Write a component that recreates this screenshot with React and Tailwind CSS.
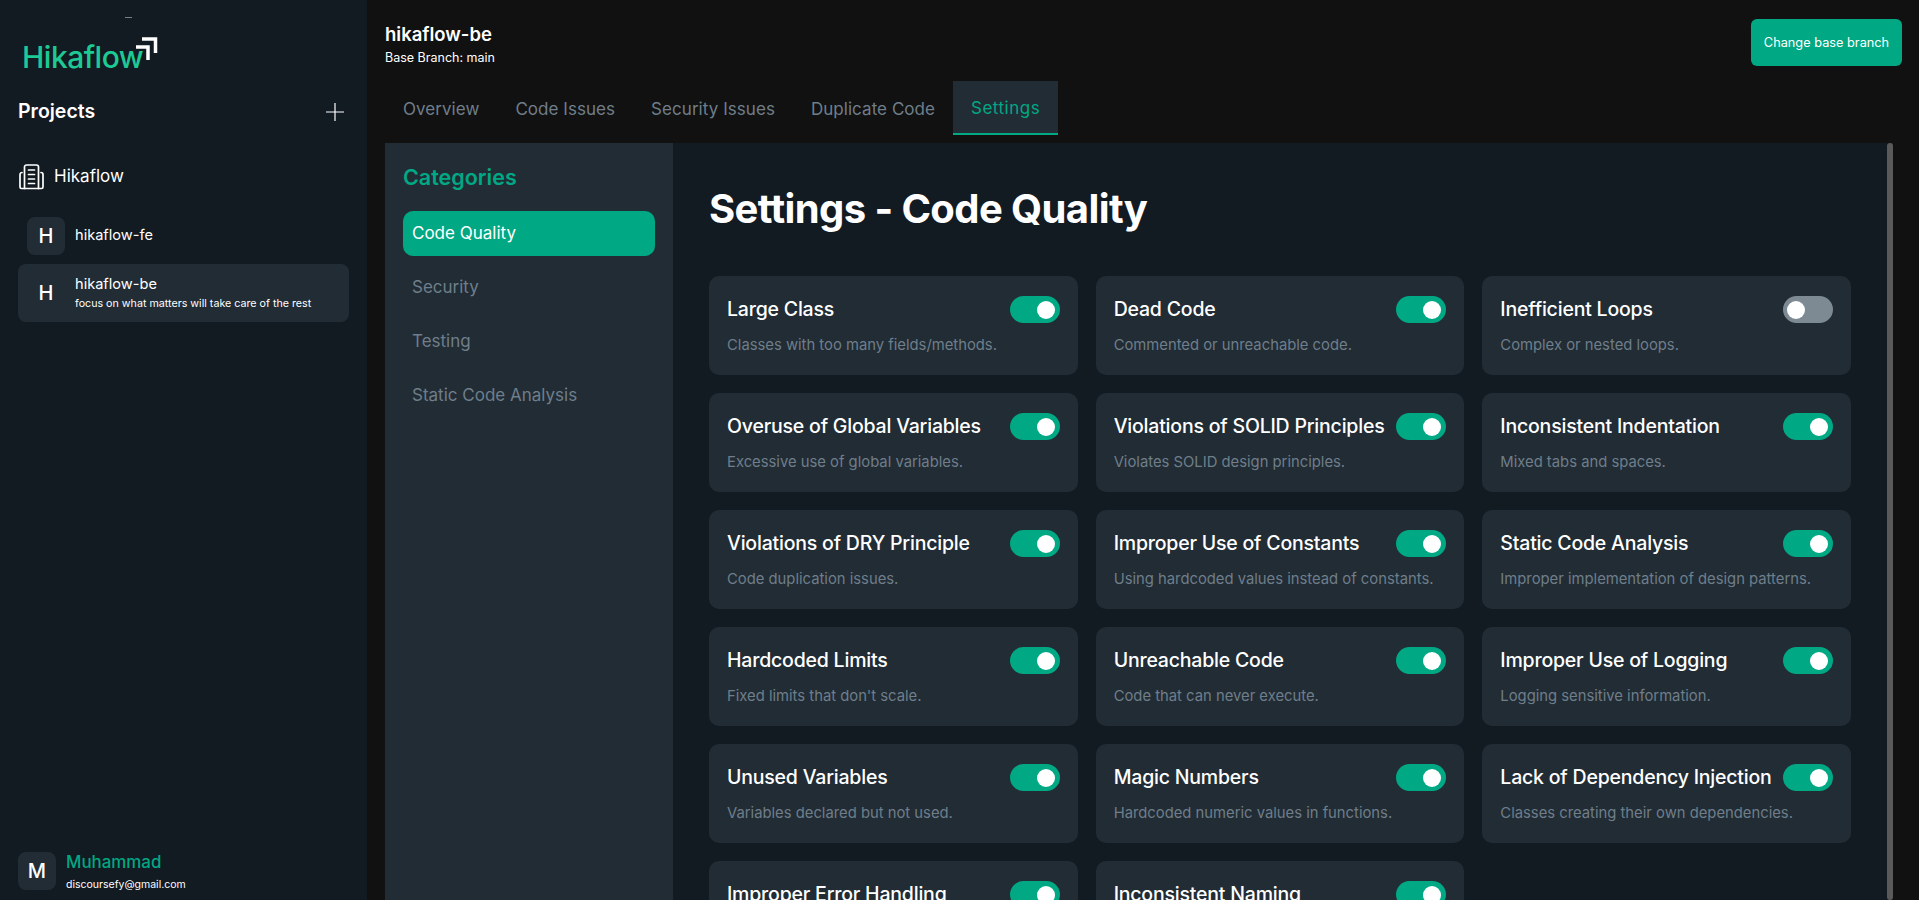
import React from 'react'

const font = "font-['Inter','Noto_Sans',sans-serif]"

const rules = [
  { title: 'Large Class', desc: 'Classes with too many fields/methods.', on: true },
  { title: 'Dead Code', desc: 'Commented or unreachable code.', on: true },
  { title: 'Inefficient Loops', desc: 'Complex or nested loops.', on: false },
  { title: 'Overuse of Global Variables', desc: 'Excessive use of global variables.', on: true },
  { title: 'Violations of SOLID Principles', desc: 'Violates SOLID design principles.', on: true },
  { title: 'Inconsistent Indentation', desc: 'Mixed tabs and spaces.', on: true },
  { title: 'Violations of DRY Principle', desc: 'Code duplication issues.', on: true },
  { title: 'Improper Use of Constants', desc: 'Using hardcoded values instead of constants.', on: true },
  { title: 'Static Code Analysis', desc: 'Improper implementation of design patterns.', on: true },
  { title: 'Hardcoded Limits', desc: "Fixed limits that don't scale.", on: true },
  { title: 'Unreachable Code', desc: 'Code that can never execute.', on: true },
  { title: 'Improper Use of Logging', desc: 'Logging sensitive information.', on: true },
  { title: 'Unused Variables', desc: 'Variables declared but not used.', on: true },
  { title: 'Magic Numbers', desc: 'Hardcoded numeric values in functions.', on: true },
  { title: 'Lack of Dependency Injection', desc: 'Classes creating their own dependencies.', on: true },
  { title: 'Improper Error Handling', desc: 'Missing or generic error handling.', on: true },
  { title: 'Inconsistent Naming', desc: 'Names that do not follow conventions.', on: true },
]

const tabs = ['Overview', 'Code Issues', 'Security Issues', 'Duplicate Code', 'Settings']
const categories = ['Code Quality', 'Security', 'Testing', 'Static Code Analysis']

const Avatar = ({ letter }) => (
  <div className="w-[38px] h-[38px] shrink-0 rounded-lg bg-[#212c35] flex items-center justify-center text-white text-[20px] font-medium">
    {letter}
  </div>
)

const Toggle = ({ on }) => (
  <div className={`w-[50px] h-[27px] shrink-0 rounded-full flex items-center ${on ? 'bg-[#00a884] justify-end pr-[5px]' : 'bg-[#7d8a94] justify-start pl-[4px]'}`}>
    <div className="w-[18px] h-[18px] rounded-full bg-white"></div>
  </div>
)

const RuleCard = ({ title, desc, on }) => (
  <div className="h-[99px] shrink-0 rounded-[10px] bg-[#212c35] px-[18px] pt-[20px]">
    <div className="flex items-center justify-between gap-1 h-[27px]">
      <span className="text-white text-[19.5px] font-medium tracking-[-0.2px] whitespace-nowrap">{title}</span>
      <Toggle on={on} />
    </div>
    <p className="mt-[12px] text-[#6f7e8a] text-[14.8px] leading-[20px] whitespace-nowrap">{desc}</p>
  </div>
)

const Logo = () => (
  <div className="relative h-[90px] shrink-0 pl-[22px] pt-[37px]">
    <span className="block text-[#1dc994] text-[30px] font-medium leading-[40px] tracking-[-0.5px]">Hikaflow</span>
    <svg className="absolute left-[134px] top-[36px]" width="25" height="26" viewBox="0 0 25 26" fill="none" stroke="#fff" strokeWidth="3.5">
      <path d="M8 3h13.500v14" />
      <path d="M2 11h12v13" />
    </svg>
    <div className="absolute left-[125px] top-[17px] w-[7px] h-px bg-[#77808a]"></div>
  </div>
)

const Sidebar = () => (
  <aside className="w-[367px] shrink-0 h-full bg-[#121a22] flex flex-col text-white">
    <Logo />
    <div className="flex items-center justify-between pl-[18px] pr-[23px] mt-[6px] h-[32px]">
      <span className="text-[19.5px] font-semibold">Projects</span>
      <svg width="18" height="18" viewBox="0 0 18 18" stroke="#fff" strokeWidth="1.2">
        <path d="M9 0v18M0 9h18" />
      </svg>
    </div>
    <div className="flex items-center gap-[10px] pl-[19px] mt-[34px] h-[30px]">
      <svg width="25" height="26" viewBox="0 0 25 26" fill="none" stroke="#fff" strokeWidth="1.7" strokeLinejoin="round" strokeLinecap="round">
        <path d="M5.500 24.500V3a2 2 0 0 1 2-2h10a2 2 0 0 1 2 2v21.500" />
        <path d="M3 8.500a2 2 0 0 0-2 2v12.500a1.500 1.500 0 0 0 1.500 1.500h20a1.500 1.500 0 0 0 1.500-1.500V10.500a2 2 0 0 0-2-2" />
        <path d="M9.500 6h6M9.500 10.500h6M9.500 15h6M9.500 19.500h6" />
      </svg>
      <span className="text-[17px]">Hikaflow</span>
    </div>
    <div className="flex items-center gap-[10px] pl-[27px] mt-[25px] h-[38px]">
      <Avatar letter="H" />
      <span className="text-[14.600px]">hikaflow-fe</span>
    </div>
    <div className="mx-[18px] mt-[9px] h-[58px] rounded-lg bg-[#212c35] flex items-center gap-[10px] pl-[9px]">
      <Avatar letter="H" />
      <div className="flex flex-col">
        <span className="text-[14.600px] leading-[20px]">hikaflow-be</span>
        <span className="text-[10.700px] leading-[16px] mt-[2px] whitespace-nowrap">focus on what matters will take care of the rest</span>
      </div>
    </div>
    <div className="mt-auto mb-[10px] ml-[18px] h-[38px] flex items-center gap-[10px]">
      <Avatar letter="M" />
      <div className="flex flex-col">
        <span className="text-[#00a884] text-[16.900px] font-medium leading-[22px] mt-[2px]">Muhammad</span>
        <span className="text-[10.500px] leading-[16px] mt-[4px]">discoursefy@gmail.com</span>
      </div>
    </div>
  </aside>
)

const Header = () => (
  <div className="h-[81px] shrink-0 flex justify-between pl-[18px] pr-[17px]">
    <div className="pt-[21px]">
      <div className="text-white text-[18.500px] font-semibold leading-[26px]">hikaflow-be</div>
      <div className="text-white text-[12.500px] leading-[16px] mt-[3px]">Base Branch: main</div>
    </div>
    <button className="mt-[19px] w-[151px] h-[47px] rounded-md bg-[#00a884] text-white text-[12.750px]">
      Change base branch
    </button>
  </div>
)

const Tabs = () => (
  <div className="h-[62px] shrink-0 flex items-start pl-[18px] text-[17px] tracking-[0.05px]">
    {tabs.map((tab) => (
      <div
        key={tab}
        className={`h-[54px] pt-[3px] px-[18px] flex items-center ${tab === 'Settings' ? 'bg-[#212c35] text-[#00a884] border-b-2 border-[#00a884] tracking-[0.5px]' : 'text-[#6f7e8a]'}`}
      >
        {tab}
      </div>
    ))}
  </div>
)

const Categories = () => (
  <div className="w-[288px] shrink-0 bg-[#212c35] px-[18px] pt-[18px]">
    <h2 className="text-[#00a884] text-[21.5px] font-semibold leading-[32px]">Categories</h2>
    <div className="mt-[18px] flex flex-col">
      {categories.map((c, i) => (
        <div
          key={c}
          className={`h-[45px] mb-[9px] rounded-[10px] px-[9px] flex items-center text-[17px] ${i === 0 ? 'bg-[#00a884] text-white' : 'text-[#6f7e8a]'}`}
        >
          {c}
        </div>
      ))}
    </div>
  </div>
)

const App = () => {
  return (
    <div className={`${font} w-full h-screen overflow-hidden flex bg-[#111111]`}>
      <Sidebar />
      <main className="flex-1 min-w-0 h-full flex flex-col">
        <Header />
        <Tabs />
        <div className="flex-1 min-h-0 flex pl-[18px] pr-[26px]">
          <Categories />
          <div className="flex-1 min-w-0 bg-[#121a22] flex overflow-hidden">
            <div className="flex-1 min-w-0 px-[36px] pt-[38px]">
              <h1 className="text-white text-[40px] font-bold leading-[56px] tracking-[-0.6px]">Settings - Code Quality</h1>
              <div className="mt-[39px] grid grid-cols-3 gap-[18px]">
                {rules.map((r) => (
                  <RuleCard key={r.title} {...r} />
                ))}
              </div>
            </div>
            <div className="w-[6px] shrink-0 rounded-full bg-[#5a5a5a]"></div>
          </div>
        </div>
      </main>
    </div>
  )
}

export default App
